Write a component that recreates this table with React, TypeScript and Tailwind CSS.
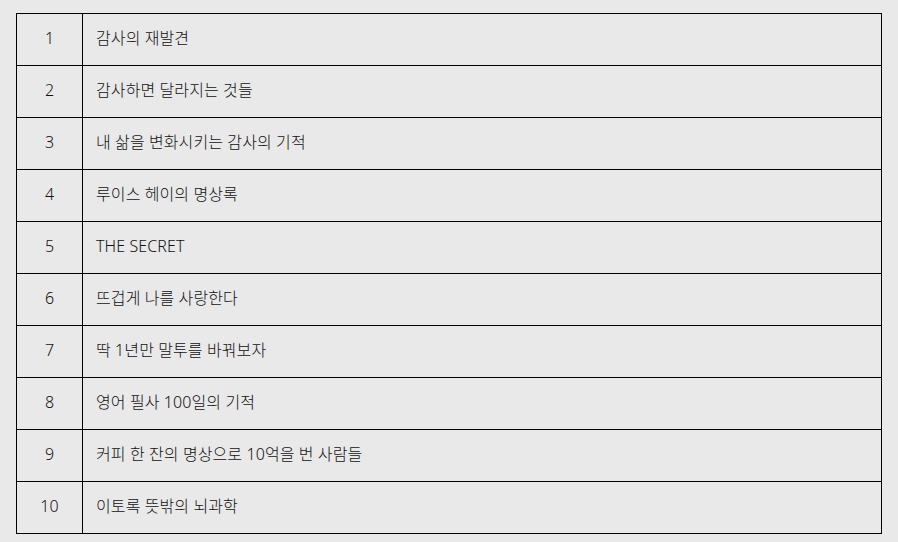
const books = [
  '감사의 재발견',
  '감사하면 달라지는 것들',
  '내 삶을 변화시키는 감사의 기적',
  '루이스 헤이의 명상록',
  'THE SECRET',
  '뜨겁게 나를 사랑한다',
  '딱 1년만 말투를 바꿔보자',
  '영어 필사 100일의 기적',
  '커피 한 잔의 명상으로 10억을 번 사람들',
  '이토록 뜻밖의 뇌과학',
]

export default function App() {
  return (
    <div className="min-h-[542px] w-full bg-[#e9e9e9] pt-[13px] pl-4 font-['Noto_Sans','Noto_Sans_CJK_KR',sans-serif] text-[16px] font-light text-[#111]">
      <div className="w-[866px] border-t border-l border-black">
        {books.map((title, i) => (
          <div key={i} className="flex h-[52px] border-b border-black">
            <div className="flex w-[66px] shrink-0 items-center justify-center border-r border-black pb-[3px]">
              {i + 1}
            </div>
            <div className="flex flex-1 items-center border-r border-black pb-[3px] pl-[13px] tracking-[0.1px]">
              {title}
            </div>
          </div>
        ))}
      </div>
    </div>
  )
}
